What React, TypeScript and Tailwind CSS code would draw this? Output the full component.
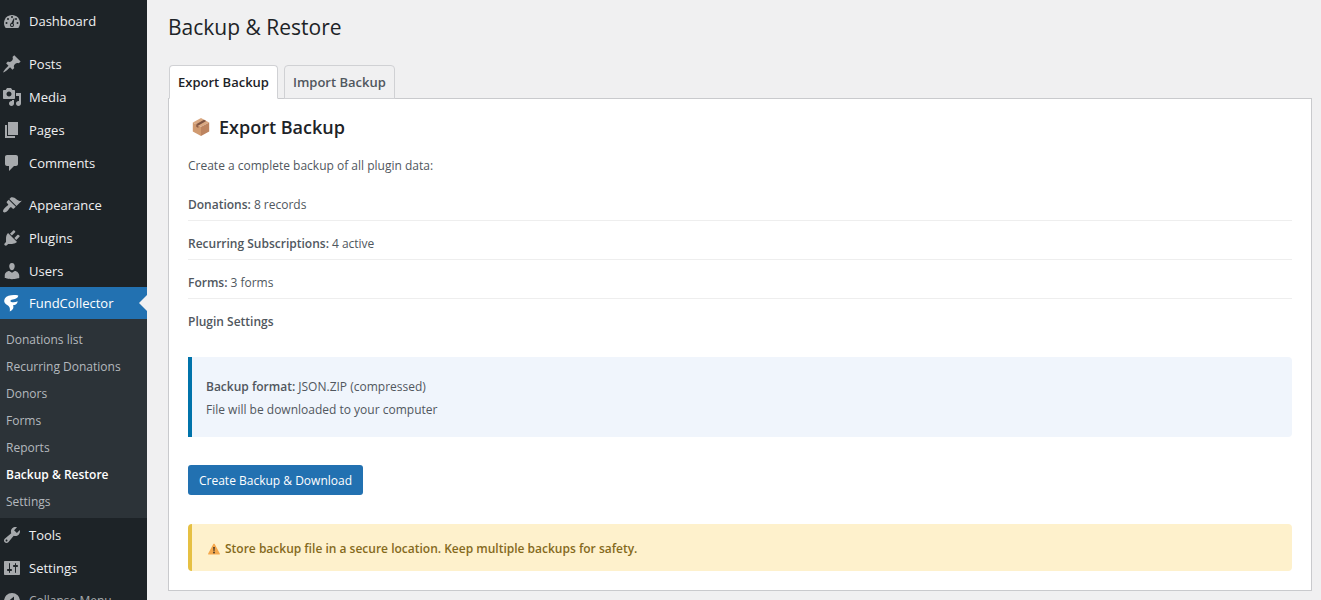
import { useState } from "react";
import clsx from "clsx";

type MenuItem = {
  label: string;
  path: string;
};

const contentMenu: MenuItem[] = [
  {
    label: "Posts",
    path: "M10.44 3.02l1.82-1.82 6.36 6.35-1.83 1.82c-1.05-.68-2.48-.57-3.41.36l-.75.75c-.92.93-1.04 2.35-.35 3.41l-1.83 1.82-2.41-2.41-2.8 2.79c-.42.42-3.38 2.71-3.8 2.29s1.86-3.39 2.28-3.81l2.79-2.79L4.1 9.36l1.83-1.82c1.05.69 2.48.57 3.4-.36l.75-.75c.93-.92 1.05-2.35.36-3.41z",
  },
  {
    label: "Media",
    path: "M13 11V4c0-.55-.45-1-1-1h-1.67L9 1H5L3.67 3H2c-.55 0-1 .45-1 1v7c0 .55.45 1 1 1h10c.55 0 1-.45 1-1zM7 4.5c1.38 0 2.5 1.12 2.5 2.5S8.38 9.5 7 9.5 4.5 8.38 4.5 7 5.62 4.5 7 4.5zM14 6h5v10.5c0 1.38-1.12 2.5-2.5 2.5S14 17.88 14 16.5s1.12-2.5 2.5-2.5c.17 0 .34.02.5.05V9h-3V6zM10 14.05V13h2v3.5c0 1.38-1.12 2.5-2.5 2.5S7 17.88 7 16.5 8.12 14 9.5 14c.17 0 .34.02.5.05z",
  },
  { label: "Pages", path: "M6 15V2h10v13H6zm-1 1h8v2H3V5h2v11z" },
  {
    label: "Comments",
    path: "M5 2h9c1.1 0 2 .9 2 2v7c0 1.1-.9 2-2 2h-2l-5 5v-5H5c-1.1 0-2-.9-2-2V4c0-1.1.9-2 2-2z",
  },
];

const manageMenu: MenuItem[] = [
  {
    label: "Appearance",
    path: "M14.48 11.06L7.41 3.99l1.5-1.5c.5-.56 2.3-.47 3.51.32 1.21.8 1.43 1.28 2.91 2.1 1.18.64 2.45 1.26 4.45.85zm-.71.71L6.7 4.7 4.93 6.47c-.39.39-.39 1.02 0 1.41l1.06 1.06c.39.39.39 1.03 0 1.42-.6.6-1.43 1.11-2.21 1.69-.35.26-.7.53-1.01.84C1.43 14.23.4 16.08 1.4 17.07c.99 1 2.84-.03 4.18-1.36.31-.31.58-.66.85-1.02.57-.78 1.08-1.61 1.69-2.21.39-.39 1.02-.39 1.41 0l1.06 1.06c.39.39 1.02.39 1.41 0z",
  },
  {
    label: "Plugins",
    path: "M13.11 4.36L9.87 7.6 8 5.73l3.24-3.24c.35-.34 1.05-.2 1.56.32.52.51.66 1.21.31 1.55zm-8 1.77l.91-1.12 9.01 9.01-1.19.84c-.71.71-2.63 1.16-3.82 1.16H6.14L4.9 17.26c-.59.59-1.54.59-2.12 0-.59-.58-.59-1.53 0-2.12l1.24-1.24v-3.88c0-1.13.4-3.19 1.09-3.89zm7.26 3.97l3.24-3.24c.34-.35 1.04-.21 1.55.31.52.51.66 1.21.31 1.55l-3.24 3.25z",
  },
  {
    label: "Users",
    path: "M10 9.25c-2.27 0-2.73-3.44-2.73-3.44C7 4.02 7.82 2 9.97 2c2.16 0 2.98 2.02 2.71 3.81 0 0-.41 3.44-2.68 3.44zm0 2.57L12.72 10c2.39 0 4.52 2.33 4.52 4.53v2.49s-3.65 1.13-7.24 1.13c-3.65 0-7.24-1.13-7.24-1.13v-2.49c0-2.25 1.94-4.48 4.47-4.48z",
  },
];

const systemMenu: MenuItem[] = [
  {
    label: "Tools",
    path: "M16.68 9.77c-1.34 1.34-3.3 1.67-4.95.99l-5.41 6.52c-.99.99-2.59.99-3.58 0s-.99-2.59 0-3.57l6.52-5.42c-.68-1.65-.35-3.61.99-4.95 1.28-1.28 3.12-1.62 4.72-1.06l-2.89 2.89 2.82 2.82 2.86-2.87c.53 1.58.18 3.39-1.08 4.65zM3.81 16.21c.4.39 1.04.39 1.43 0 .4-.4.4-1.04 0-1.43-.39-.4-1.03-.4-1.43 0-.39.39-.39 1.03 0 1.43z",
  },
  {
    label: "Settings",
    path: "M18 16V4c0-.55-.45-1-1-1H3c-.55 0-1 .45-1 1v12c0 .55.45 1 1 1h14c.55 0 1-.45 1-1zM8 11h1c.55 0 1 .45 1 1s-.45 1-1 1H8v1.5c0 .28-.22.5-.5.5s-.5-.22-.5-.5V13H6c-.55 0-1-.45-1-1s.45-1 1-1h1V5.5c0-.28.22-.5.5-.5s.5.22.5.5V11zm5-2h-1c-.55 0-1-.45-1-1s.45-1 1-1h1V5.5c0-.28.22-.5.5-.5s.5.22.5.5V7h1c.55 0 1 .45 1 1s-.45 1-1 1h-1v5.5c0 .28-.22.5-.5.5s-.5-.22-.5-.5V9z",
  },
];

const submenu = [
  "Donations list",
  "Recurring Donations",
  "Donors",
  "Forms",
  "Reports",
  "Backup & Restore",
  "Settings",
];

const backupItems = [
  { name: "Donations:", value: "8 records" },
  { name: "Recurring Subscriptions:", value: "4 active" },
  { name: "Forms:", value: "3 forms" },
  { name: "Plugin Settings", value: "" },
];

const DashboardIcon = () => (
  <svg viewBox="0 0 20 20" className="h-5 w-5 shrink-0 text-[#a7aaad]" aria-hidden="true">
    <path
      fill="currentColor"
      d="M3.76 17h12.48c1.09-1.38 1.76-3.11 1.76-5 0-4.42-3.58-8-8-8s-8 3.58-8 8c0 1.89.67 3.62 1.76 5z"
    />
    <g fill="#1d2327">
      <circle cx="10" cy="6" r="1" />
      <circle cx="6" cy="8" r="1" />
      <circle cx="14" cy="8" r="1" />
      <circle cx="4.5" cy="12" r="1" />
      <circle cx="15.5" cy="12" r="1" />
      <path d="M11.8 7.2l.7.3-1 5.2c.3.4.5.8.5 1.3a2 2 0 1 1-2.6-1.9z" />
    </g>
    <circle cx="10" cy="14" r="1" fill="currentColor" />
  </svg>
);

const FundIcon = () => (
  <svg viewBox="0 0 20 20" className="h-5 w-5 shrink-0" aria-hidden="true">
    <path
      fill="#fff"
      d="M16.300 2.500C11 1.600 5 2.200 3 5.300 1.600 7.500 2 9.700 4 11.200c2 1.300 4.600 2 3.800 7.300 3.200-1.500 4.400-3.800 3.200-6.200 2.400 0 4.400-1.200 4.700-4-2 1-4.500 1.300-6.500.7-1.200-.5-1-2 .4-2.300 3-.6 6.300-.9 6.700-4.200z"
    />
  </svg>
);

const CollapseIcon = () => (
  <svg viewBox="0 0 20 20" className="h-5 w-5 shrink-0" aria-hidden="true">
    <path
      fill="currentColor"
      fillRule="evenodd"
      d="M10 2a8 8 0 1 0 0 16 8 8 0 0 0 0-16zm2 3.500v9L6.500 10z"
    />
  </svg>
);

const BoxIcon = () => (
  <svg viewBox="0 0 20 20" className="h-5 w-5 shrink-0" aria-hidden="true">
    <path fill="#d9a882" d="M1.800 5.500L10 1l8.200 4.500L10 9.800z" />
    <path fill="#d09a70" d="M1.800 5.500L10 9.800V19l-8.200-4.500z" />
    <path fill="#bd8460" d="M18.200 5.500L10 9.800V19l8.200-4.500z" />
    <path fill="#7d5442" d="M5.200 7.300L13 2.700l2.200 1.200-7.800 4.500z" />
    <path fill="#8f5f47" d="M5.200 7.300l2.200 1.100V11l-2.200-1.200z" />
  </svg>
);

const WarningIcon = () => (
  <svg viewBox="0 0 14 14" className="h-3.5 w-3.5 shrink-0" aria-hidden="true">
    <path
      fill="#f5a94e"
      d="M6.300 2.100c.3-.6 1.100-.6 1.400 0l5.100 9.300c.3.600 0 1.100-.6 1.100H1.800c-.6 0-.9-.5-.6-1.100z"
    />
    <path fill="#3f3326" d="M6.200 4.900h1.600L7.500 9h-1z" />
    <circle cx="7" cy="10.500" r=".9" fill="#3f3326" />
  </svg>
);

const MenuLinks = ({ items }: { items: MenuItem[] }) => (
  <ul>
    {items.map((item) => (
      <li key={item.label}>
        <a href="#" className="flex h-[33px] items-center gap-[7px] pl-0.5">
          <svg viewBox="0 0 20 20" className="h-5 w-5 shrink-0 text-[#a7aaad]" aria-hidden="true">
            <path fill="currentColor" fillRule="evenodd" d={item.path} />
          </svg>
          {item.label}
        </a>
      </li>
    ))}
  </ul>
);

const Sidebar = () => (
  <nav className="w-[147px] shrink-0 bg-[#1d2327] pt-1 text-[13px] leading-[18px] text-[#f0f0f1]">
    <a href="#" className="mb-2.5 flex h-[33px] items-center gap-[7px] pl-0.5">
      <DashboardIcon />
      Dashboard
    </a>
    <MenuLinks items={contentMenu} />
    <div className="h-[9px]" />
    <MenuLinks items={manageMenu} />
    <a
      href="#"
      className="relative flex h-8 items-center gap-[7px] bg-[#2271b1] pl-0.5 text-white"
    >
      <FundIcon />
      FundCollector
      <span className="absolute right-0 top-2 border-y-8 border-r-8 border-y-transparent border-r-[#f0f0f1]" />
    </a>
    <ul className="bg-[#2c3338] pb-[3px] pt-[7px] text-xs text-[#b4b9be]">
      {submenu.map((label) => (
        <li key={label}>
          <a
            href="#"
            className={clsx(
              "flex h-[27px] items-center pl-1.5",
              label === "Backup & Restore" && "font-semibold text-white"
            )}
          >
            {label}
          </a>
        </li>
      ))}
    </ul>
    <MenuLinks items={systemMenu} />
    <button
      type="button"
      className="flex h-[33px] w-full items-center gap-[7px] pl-0.5 text-xs text-[#a7aaad]"
    >
      <CollapseIcon />
      Collapse Menu
    </button>
  </nav>
);

const ExportPanel = () => (
  <div>
    <h2 className="flex items-center gap-2 pl-[3px] text-lg leading-6 font-semibold text-[#1d2327]">
      <BoxIcon />
      Export Backup
    </h2>
    <p className="mt-[18px]">Create a complete backup of all plugin data:</p>
    <ul className="mt-[7px]">
      {backupItems.map((item) => (
        <li
          key={item.name}
          className="flex h-[39px] gap-[3px] border-b border-[#eeeeee] pt-3.5 last:border-b-0"
        >
          <strong className="font-semibold">{item.name}</strong>
          {item.value}
        </li>
      ))}
    </ul>
    <div className="mt-[19px] flex h-20 flex-col justify-center rounded-r border-l-4 border-[#0073aa] bg-[#f0f5fc] pl-3.5 pt-0.5 leading-[23px]">
      <p>
        <strong className="font-semibold">Backup format:</strong> JSON.ZIP (compressed)
      </p>
      <p>File will be downloaded to your computer</p>
    </div>
    <button
      type="button"
      className="mt-7 block h-[30px] rounded-[3px] bg-[#2271b1] px-[11px] pt-0.5 text-white"
    >
      Create Backup &amp; Download
    </button>
    <div className="mt-[29px] flex h-[47px] items-center gap-1 rounded border-l-4 border-[#e6c043] bg-[#fef1cc] pl-[15px] pt-0.5 font-semibold text-[#856a1c]">
      <WarningIcon />
      Store backup file in a secure location. Keep multiple backups for safety.
    </div>
  </div>
);

const tabs = ["Export Backup", "Import Backup"];

const App = () => {
  const [active, setActive] = useState<string>("Export Backup");

  return (
    <div className="flex h-screen overflow-hidden bg-[#f0f0f1] font-['Open_Sans',sans-serif]">
      <Sidebar />
      <main className="min-w-0 flex-1 pl-[21px] pr-[9px] pt-3 text-xs leading-[18px] text-[#50575e]">
        <h1 className="text-[21px] leading-[30px] text-[#1d2327]">Backup &amp; Restore</h1>
        <div className="mt-[23px] flex gap-1.5 pl-px" role="tablist">
          {tabs.map((tab) => (
            <button
              key={tab}
              type="button"
              role="tab"
              aria-selected={active === tab}
              onClick={() => setActive(tab)}
              className={clsx(
                "h-[34px] rounded-t border border-[#d0d1d4] px-2 text-[13px] font-semibold",
                active === tab
                  ? "z-10 border-b-white bg-white text-[#1d2327]"
                  : "bg-[#f0f0f1] text-[#50575e]"
              )}
            >
              {tab}
            </button>
          ))}
        </div>
        <section className="-mt-px border border-[#c9cacd] bg-white px-[19px] pb-[19px] pt-4">
          {active === "Export Backup" && <ExportPanel />}
        </section>
      </main>
    </div>
  );
};

export default App;
